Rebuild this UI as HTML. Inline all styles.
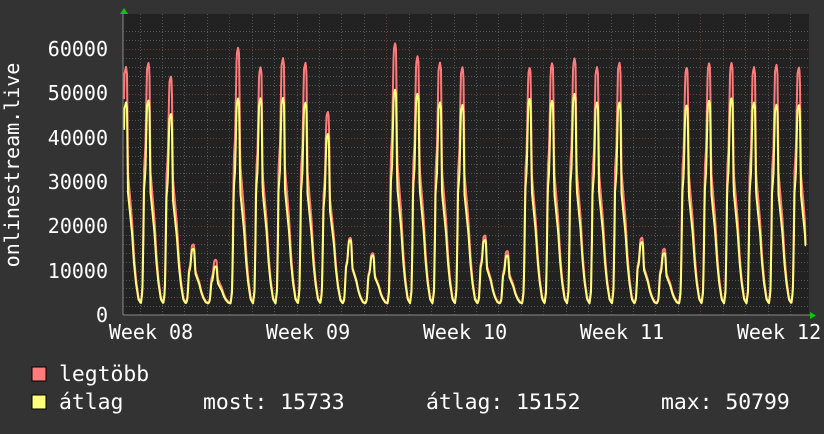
<!DOCTYPE html>
<html><head><meta charset="utf-8"><style>
body{margin:0;background:#333;width:824px;height:430px;overflow:hidden;font-family:"DejaVu Sans Mono","Liberation Mono",monospace;}
svg text{font-family:"DejaVu Sans Mono","Liberation Mono",monospace;fill:#fff;}
</style></head><body>
<svg id="g" width="824" height="430" xmlns="http://www.w3.org/2000/svg">
<rect width="824" height="430" fill="#333"/>
<rect x="123" y="14" width="686" height="301" fill="#222"/>
<g id="grid"></g>
<polyline id="mx" fill="none" stroke="#ff7b7b" stroke-width="2" stroke-linejoin="round"/>
<polyline id="av" fill="none" stroke="#ffff7b" stroke-width="2" stroke-linejoin="round"/>
<line x1="123" y1="315" x2="812" y2="315" stroke="#888" stroke-width="1"/>
<line x1="123" y1="12" x2="123" y2="315" stroke="#888" stroke-width="1"/>
<polygon points="120,14 124,8 128,14" fill="#0c0"/>
<polygon points="810,312 816,315.5 810,319" fill="#0c0"/>
<g font-size="20" text-anchor="end">
<text x="108" y="322">0</text><text x="108" y="278">10000</text><text x="108" y="233">20000</text>
<text x="108" y="189">30000</text><text x="108" y="145">40000</text><text x="108" y="100">50000</text><text x="108" y="56">60000</text>
</g>
<text transform="translate(19,165) rotate(-90)" font-size="20" text-anchor="middle">onlinestream.live</text>
<g font-size="20" text-anchor="middle">
<text x="151" y="339">Week 08</text><text x="308" y="339">Week 09</text><text x="465" y="339">Week 10</text>
<text x="622" y="339">Week 11</text><text x="779" y="339">Week 12</text>
</g>
<rect x="32" y="367" width="14" height="14" fill="#ff7b7b" stroke="#000" stroke-width="1"/>
<rect x="32" y="395" width="14" height="14" fill="#ffff7b" stroke="#000" stroke-width="1"/>
<g font-size="21.4">
<text x="59" y="381">legtöbb</text>
<text x="59" y="409">átlag</text>
<text x="203" y="409">most: 15733</text>
<text x="426" y="409">átlag: 15152</text>
<text x="661" y="409">max: 50799</text>
</g>
</svg>
<script>
var ns="http://www.w3.org/2000/svg",g=document.getElementById('grid');
function ln(x1,y1,x2,y2,c,d){var l=document.createElementNS(ns,'line');l.setAttribute('x1',x1);l.setAttribute('y1',y1);l.setAttribute('x2',x2);l.setAttribute('y2',y2);l.setAttribute('stroke',c);l.setAttribute('stroke-width',1);if(d)l.setAttribute('stroke-dasharray',d);g.appendChild(l);}
for(var v=2000;v<=64000;v+=2000){var y=Math.round(315-v*0.00443)+0.5;if(y<14)break;ln(123,y,809,y,v%10000?'#555':'#6a3a3a','1,2');}
for(var k=-6;k<40;k++){var x=229.3+k*22.43;if(x<124||x>809)continue;var maj=((k%7)+7)%7==0;ln(Math.round(x)+0.5,14,Math.round(x)+0.5,315,maj?'#6a3a3a':'#555','1,2');}
var pm=[56000,57000,54000,16000,12500,60500,56000,58000,57000,46000,17500,14000,61500,58500,57000,56000,18000,14500,56000,57000,58000,56000,57000,17500,15000,56000,57000,57000,56000,56500,56000];
var pa=[48000,48500,45500,15000,11000,49000,49000,49000,48000,41000,17000,13500,51000,50000,48000,47500,17000,13500,49000,48500,50000,48000,48000,16500,14000,47500,48500,49000,48000,47500,47500];
var sh=[[-7.5,0.0],[-6,0.06],[-5,0.33],[-4.5,0.55],[-3,0.65],[-1.5,0.97],[0,1],[1,0.97],[2,0.55],[4,0.45],[6,0.35],[8,0.2],[10,0.1],[12.5,0.02],[14.93,0.0]];
function f(d){if(d<=sh[0][0])return sh[0][1];for(var i=1;i<sh.length;i++){if(d<=sh[i][0]){var a=sh[i-1],b=sh[i];return a[1]+(b[1]-a[1])*(d-a[0])/(b[0]-a[0]);}}return 0;}
var m=[],a=[];
for(var x=124;x<=806;x+=0.5){var r=(x-126)/22.43,i=Math.floor(r),d=(r-i)*22.43;
if(d>14.93){i+=1;d-=22.43;}
var ii=Math.max(0,Math.min(pm.length-1,i));
var P=pm[ii],A=pa[ii];var t=f(d);if(i<0)t=Math.max(t,0.9);
var vm=2800+(P-2800)*t,va=2600+(A-2600)*t;
if(x>=805.5){va=15733;vm=16000;}
m.push(x+','+(315-vm*0.00443).toFixed(1));a.push(x+','+(315-va*0.00443).toFixed(1));}
document.getElementById('mx').setAttribute('points',m.join(' '));
document.getElementById('av').setAttribute('points',a.join(' '));
</script>
</body></html>
